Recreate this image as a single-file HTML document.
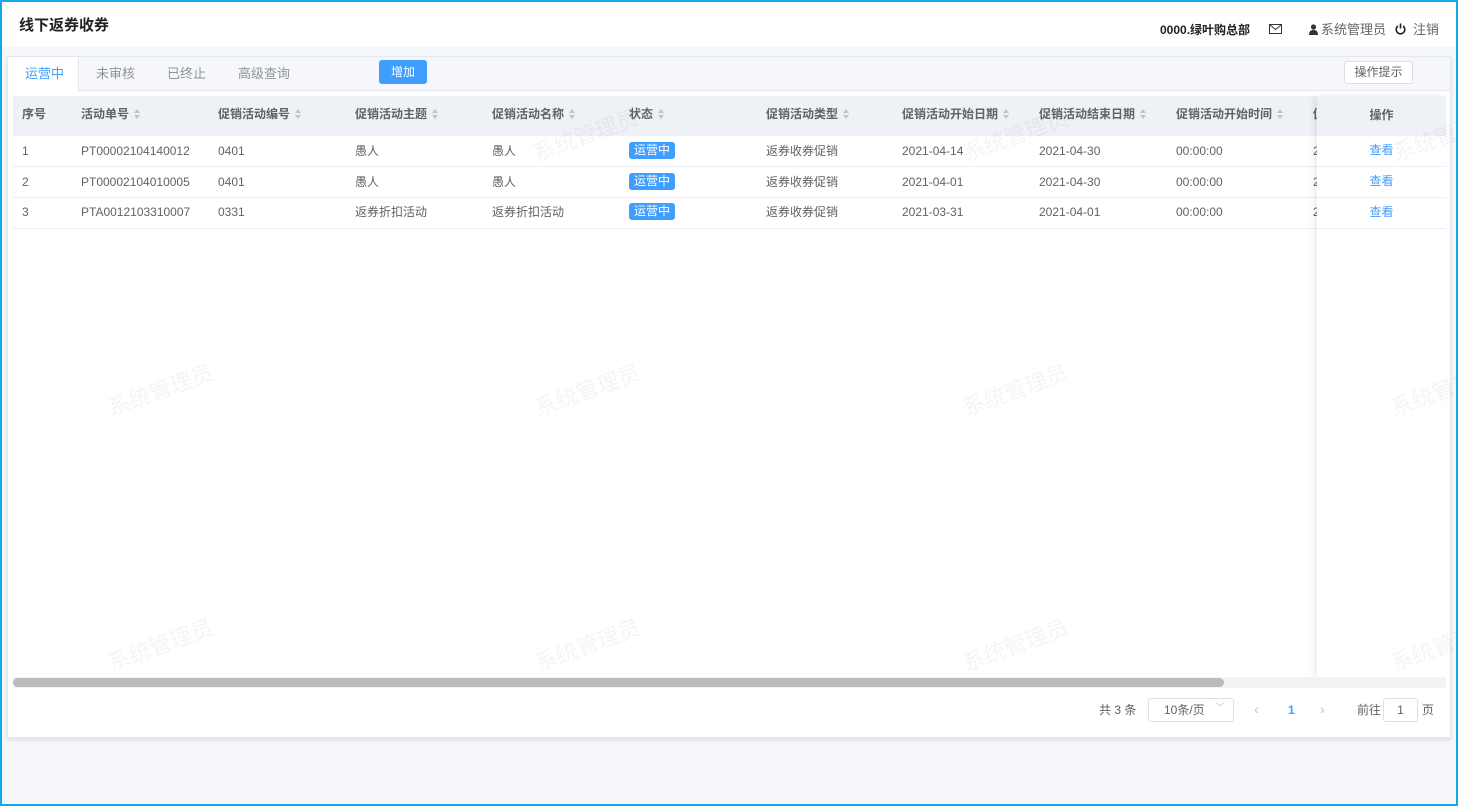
<!DOCTYPE html>
<html><head><meta charset="utf-8"><style>
*{box-sizing:border-box;margin:0;padding:0}
body{width:1458px;height:806px;overflow:hidden;background:#f5f7fa;font-family:"Liberation Sans","Noto Sans CJK SC",sans-serif;color:#606266;font-size:12px;position:relative}
.frame{position:absolute;inset:0;border:2px solid #14a7ea;z-index:50;pointer-events:none}
.hdr{position:absolute;left:0;top:0;width:1458px;height:47px;background:#fff}
.a{position:absolute;white-space:nowrap;line-height:14px}
.card{position:absolute;left:7px;top:56px;width:1444px;height:682px;background:#fff;border:1px solid #e4e7ed;box-shadow:0 2px 4px rgba(0,0,0,.1)}
.tabs{position:absolute;left:0;top:0;width:1442px;height:34px;background:#f5f7fa;border-bottom:1px solid #e4e7ed}
.th{position:absolute;left:5px;top:39px;width:1433px;height:40px;background:#eef1f6}
.row{position:absolute;left:5px;width:1433px;height:31px;border-bottom:1px solid #ebeef5}
.h{font-weight:bold;color:#606266}
.s{display:inline-block;width:7px;height:10px;vertical-align:-1px;margin-left:5px;position:relative}
.s:before{content:"";position:absolute;left:0;top:0;border:3.5px solid transparent;border-bottom:4px solid #c0c4cc;border-top:0}
.s:after{content:"";position:absolute;left:0;top:6px;border:3.5px solid transparent;border-top:4px solid #c0c4cc;border-bottom:0}
.tag{display:inline-block;background:#409eff;color:#fff;border-radius:3px;padding:0 5px;height:17px;line-height:17px;font-size:12px}
.wm{position:absolute;font-size:22px;color:rgba(0,0,0,.045);transform:rotate(-20deg);white-space:nowrap;z-index:40}
.op{height:31px;border-bottom:1px solid #ebeef5;text-align:center;line-height:29px;color:#409eff}
</style></head><body>
<div class="hdr"></div>
<div class="a" style="left:19px;top:18px;font-size:15px;line-height:16px;font-weight:bold;color:#222">线下返券收券</div>
<div class="a" style="left:1160px;top:23px;font-size:12px;font-weight:bold;color:#222">0000.绿叶购总部</div>
<svg class="a" style="left:1269px;top:24px" width="13" height="10" viewBox="0 0 13 10"><rect x=".5" y=".5" width="12" height="9" fill="none" stroke="#333"/><path d="M1 1l5.5 4.5L12 1" fill="none" stroke="#333"/></svg>
<svg class="a" style="left:1309px;top:24px" width="9" height="11" viewBox="0 0 9 11"><circle cx="4.5" cy="3" r="2.6" fill="#333"/><path d="M0 11c0-4 2-5 4.5-5S9 7 9 11z" fill="#333"/></svg>
<div class="a" style="left:1321px;top:23px;font-size:13px;color:#666">系统管理员</div>
<svg class="a" style="left:1395px;top:23px" width="11" height="12" viewBox="0 0 11 12"><path d="M3 3A4.3 4.3 0 1 0 8 3" fill="none" stroke="#222" stroke-width="1.6"/><path d="M5.5 0.5v5" stroke="#222" stroke-width="1.6"/></svg>
<div class="a" style="left:1413px;top:23px;font-size:13px;color:#666">注销</div>

<div class="card">
 <div class="tabs"></div>
 <div class="a" style="left:0;top:0;width:71px;height:35px;background:#fff;border-right:1px solid #e4e7ed"></div>
 <div class="a" style="left:17px;top:10px;font-size:13px;color:#409eff">运营中</div>
 <div class="a" style="left:88px;top:10px;font-size:13px;color:#909399">未审核</div>
 <div class="a" style="left:159px;top:10px;font-size:13px;color:#909399">已终止</div>
 <div class="a" style="left:230px;top:10px;font-size:13px;color:#909399">高级查询</div>
 <div class="a" style="left:371px;top:3px;width:48px;height:24px;background:#409eff;border-radius:3px;color:#fff;text-align:center;line-height:24px">增加</div>
 <div class="a" style="left:1336px;top:4px;width:69px;height:23px;background:#fff;border:1px solid #dcdfe6;border-radius:3px;text-align:center;line-height:21px;color:#606266">操作提示</div>

 <div class="th"></div>
 <div class="row" style="top:79px"></div><div class="row" style="top:110px"></div><div class="row" style="top:141px"></div>
 <div class="a h" style="left:14px;top:50px">序号</div>
 <div class="a h" style="left:73px;top:50px">活动单号<i class="s"></i></div>
 <div class="a h" style="left:210px;top:50px">促销活动编号<i class="s"></i></div>
 <div class="a h" style="left:347px;top:50px">促销活动主题<i class="s"></i></div>
 <div class="a h" style="left:484px;top:50px">促销活动名称<i class="s"></i></div>
 <div class="a h" style="left:621px;top:50px">状态<i class="s"></i></div>
 <div class="a h" style="left:758px;top:50px">促销活动类型<i class="s"></i></div>
 <div class="a h" style="left:894px;top:50px">促销活动开始日期<i class="s"></i></div>
 <div class="a h" style="left:1031px;top:50px">促销活动结束日期<i class="s"></i></div>
 <div class="a h" style="left:1168px;top:50px">促销活动开始时间<i class="s"></i></div>
 <div class="a h" style="left:1305px;top:50px">促</div>
 <div class="a" style="left:14px;top:87px">1</div><div class="a" style="left:73px;top:87px">PT00002104140012</div><div class="a" style="left:210px;top:87px">0401</div><div class="a" style="left:347px;top:87px">愚人</div><div class="a" style="left:484px;top:87px">愚人</div><div class="a" style="left:621px;top:85px"><span class="tag">运营中</span></div><div class="a" style="left:758px;top:87px">返券收券促销</div><div class="a" style="left:894px;top:87px">2021-04-14</div><div class="a" style="left:1031px;top:87px">2021-04-30</div><div class="a" style="left:1168px;top:87px">00:00:00</div><div class="a" style="left:1305px;top:87px">2</div>
 <div class="a" style="left:14px;top:118px">2</div><div class="a" style="left:73px;top:118px">PT00002104010005</div><div class="a" style="left:210px;top:118px">0401</div><div class="a" style="left:347px;top:118px">愚人</div><div class="a" style="left:484px;top:118px">愚人</div><div class="a" style="left:621px;top:116px"><span class="tag">运营中</span></div><div class="a" style="left:758px;top:118px">返券收券促销</div><div class="a" style="left:894px;top:118px">2021-04-01</div><div class="a" style="left:1031px;top:118px">2021-04-30</div><div class="a" style="left:1168px;top:118px">00:00:00</div><div class="a" style="left:1305px;top:118px">2</div>
 <div class="a" style="left:14px;top:148px">3</div><div class="a" style="left:73px;top:148px">PTA0012103310007</div><div class="a" style="left:210px;top:148px">0331</div><div class="a" style="left:347px;top:148px">返券折扣活动</div><div class="a" style="left:484px;top:148px">返券折扣活动</div><div class="a" style="left:621px;top:146px"><span class="tag">运营中</span></div><div class="a" style="left:758px;top:148px">返券收券促销</div><div class="a" style="left:894px;top:148px">2021-03-31</div><div class="a" style="left:1031px;top:148px">2021-04-01</div><div class="a" style="left:1168px;top:148px">00:00:00</div><div class="a" style="left:1305px;top:148px">2</div>
 <div class="a" style="left:1309px;top:39px;width:129px;height:581px;background:#fff;box-shadow:-3px 0 6px rgba(0,0,0,.08);line-height:normal">
  <div style="height:40px;background:#eef1f6;text-align:center;line-height:38px;font-weight:bold">操作</div>
  <div class="op">查看</div><div class="op">查看</div><div class="op">查看</div>
 </div>
 <div class="a" style="left:5px;top:620px;width:1433px;height:11px;background:#f3f3f3"></div>
 <div class="a" style="left:5px;top:621px;width:1211px;height:9px;background:#bbb;border-radius:5px"></div>
 <div class="a" style="left:1091px;top:646px">共 3 条</div>
 <div class="a" style="left:1140px;top:641px;width:86px;height:24px;border:1px solid #dcdfe6;border-radius:3px"><span style="position:absolute;left:15px;top:4px">10条/页</span><span style="position:absolute;right:8px;top:3px;color:#c0c4cc;font-size:10px">﹀</span></div>
 <div class="a" style="left:1246px;top:645px;color:#c0c4cc;font-size:14px">‹</div>
 <div class="a" style="left:1280px;top:646px;color:#409eff;font-weight:bold">1</div>
 <div class="a" style="left:1312px;top:645px;color:#c0c4cc;font-size:14px">›</div>
 <div class="a" style="left:1349px;top:646px">前往</div>
 <div class="a" style="left:1375px;top:641px;width:35px;height:24px;border:1px solid #dcdfe6;border-radius:3px;text-align:center;line-height:22px">1</div>
 <div class="a" style="left:1414px;top:646px">页</div>
</div>
<div class="wm" style="left:530px;top:118px">系统管理员</div>
<div class="wm" style="left:960px;top:118px">系统管理员</div>
<div class="wm" style="left:1390px;top:118px">系统管理员</div>
<div class="wm" style="left:105px;top:373px">系统管理员</div>
<div class="wm" style="left:532px;top:373px">系统管理员</div>
<div class="wm" style="left:960px;top:373px">系统管理员</div>
<div class="wm" style="left:1388px;top:373px">系统管理员</div>
<div class="wm" style="left:105px;top:628px">系统管理员</div>
<div class="wm" style="left:532px;top:628px">系统管理员</div>
<div class="wm" style="left:960px;top:628px">系统管理员</div>
<div class="wm" style="left:1388px;top:628px">系统管理员</div>
<div class="frame"></div>
</body></html>
